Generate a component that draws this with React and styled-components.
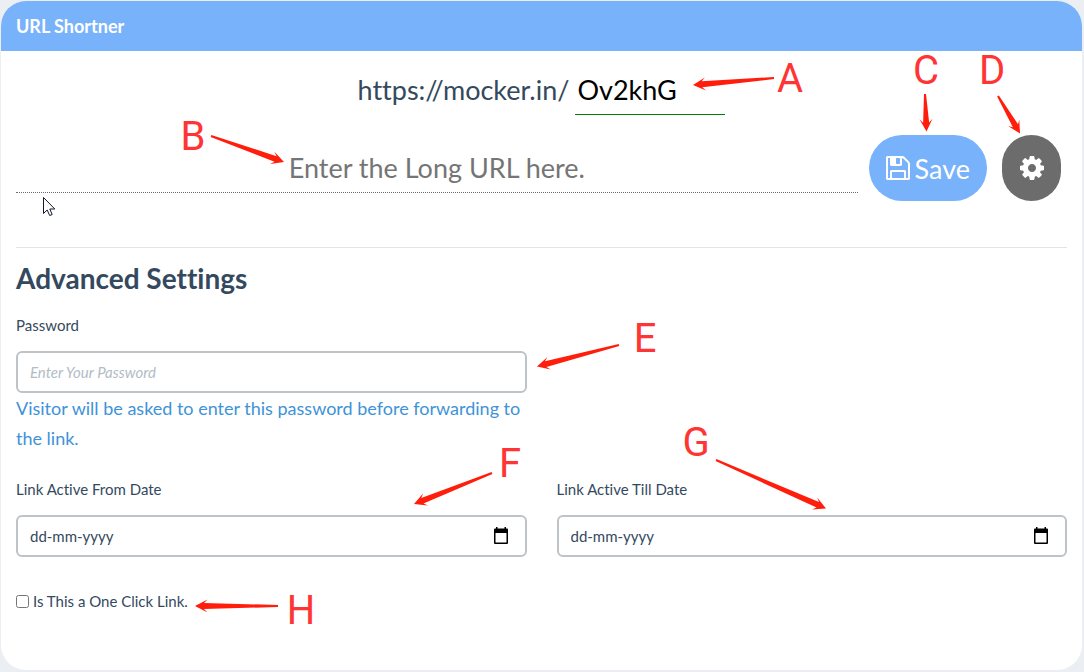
import React from "react";
import styled, { createGlobalStyle } from "styled-components";

const GlobalStyle = createGlobalStyle`
  *, *::before, *::after { box-sizing: border-box; }
  body {
    margin: 0;
    background: #ebeff3;
    color: #34495e;
    font-family: Lato, "Liberation Sans", sans-serif;
    font-size: 15px;
    font-variant-ligatures: none;
    line-height: 30px;
  }
  button, input { font-family: inherit; margin: 0; }
`;

const Page = styled.div`
  position: relative;
  padding: 1px 2px 2px 1px;
`;

const Card = styled.main`
  background: #fff;
  border-radius: 25px;
  overflow: hidden;
`;

const CardHeader = styled.header`
  background: #78b2fb;
  color: #fff;
  padding: 10px 15px;
  font-size: 18px;
  font-weight: 700;
`;

const CardBody = styled.form`
  padding: 14px 15px 54px;
`;

const SlugRow = styled.div`
  display: flex;
  justify-content: center;
  align-items: center;
  gap: 6px;
  font-size: 27px;
`;

const LineInput = styled.input`
  height: 50px;
  padding: 0 2px;
  border: 0;
  border-bottom: 1px ${(p) => p.$line};
  border-radius: 0;
  background: transparent;
  color: #000;
  font-size: 27px;
  outline: none;
  min-width: 0;
  &::placeholder { color: #757575; opacity: 1; }
`;

const SlugInput = styled(LineInput)`
  width: 150px;
`;

const LongInput = styled(LineInput)`
  flex: 1;
  text-align: center;
`;

const UrlRow = styled.div`
  display: flex;
  align-items: center;
  margin-top: 20px;
  padding-right: 6px;
`;

const PillButton = styled.button`
  display: flex;
  align-items: center;
  justify-content: center;
  gap: 5px;
  height: 66px;
  min-width: 59px;
  padding: 0 17px;
  margin-left: ${(p) => p.$gap};
  border: 0;
  border-radius: 33px;
  background: ${(p) => p.$color};
  color: #fff;
  font-size: 27px;
  cursor: pointer;
`;

const Divider = styled.hr`
  margin: 46px 0 0;
  border: 0;
  border-top: 1px solid #e3e4e6;
`;

const SectionTitle = styled.h2`
  margin: 0 0 2px;
  font-size: 28px;
  font-weight: 700;
  line-height: 60px;
`;

const FieldGrid = styled.div`
  display: grid;
  grid-template-columns: 1fr 1fr;
  column-gap: 30px;
  row-gap: 21px;
`;

const Field = styled.div`
  grid-column-start: ${(p) => p.$column};
`;

const FieldLabel = styled.label`
  display: block;
  margin-bottom: 11px;
`;

const InputBox = styled.div`
  display: flex;
  align-items: center;
  height: 42px;
  padding: 0 14px 0 12px;
  border: 2px solid #bdc3c7;
  border-radius: 6px;
`;

const BoxedInput = styled.input`
  flex: 1;
  min-width: 0;
  height: 100%;
  padding: 0;
  border: 0;
  outline: none;
  background: transparent;
  color: #34495e;
  font-size: 15px;
  &::placeholder { color: ${(p) => p.$hint}; font-style: ${(p) => p.$hintStyle}; opacity: 1; }
`;

const PickerButton = styled.button`
  display: flex;
  padding: 0;
  border: 0;
  background: none;
  color: #000;
`;

const Help = styled.p`
  margin: 0;
  color: #3e93d8;
  font-size: 18px;
`;

const CheckRow = styled.div`
  display: flex;
  align-items: center;
  gap: 4px;
  margin-top: 29px;
`;

const CheckBox = styled.input`
  width: 13px;
  height: 13px;
`;

const Overlay = styled.svg`
  position: absolute;
  left: 0;
  top: 0;
  pointer-events: none;
`;

const Marker = styled.span`
  position: absolute;
  left: ${(p) => p.$x}px;
  top: ${(p) => p.$y}px;
  width: 30px;
  margin: -15px 0 0 -15px;
  color: #ff3535;
  font: 40px/30px "Liberation Sans Narrow", Roboto, sans-serif;
  text-align: center;
  pointer-events: none;
`;

const FloppyIcon = () => (
  <svg width="24" height="24" viewBox="0 128 1536 1536" fill="currentColor" aria-hidden="true">
    <path d="M384 1536h768v-384h-768v384zm896 0h128v-896q0-14-10-38.5t-20-34.5l-281-281q-10-10-34-20t-39-10v416q0 40-28 68t-68 28h-576q-40 0-68-28t-28-68v-416h-128v1280h128v-416q0-40 28-68t68-28h832q40 0 68 28t28 68v416zm-384-928v-320q0-13-9.5-22.5t-22.5-9.5h-192q-13 0-22.5 9.5t-9.5 22.5v320q0 13 9.5 22.5t22.5 9.5h192q13 0 22.5-9.5t9.5-22.5zm640 32v928q0 40-28 68t-68 28h-1344q-40 0-68-28t-28-68v-1344q0-40 28-68t68-28h928q40 0 88 20t76 48l280 280q28 28 48 76t20 88z" />
  </svg>
);

const CogIcon = () => (
  <svg width="24" height="24" viewBox="0 128 1536 1536" fill="currentColor" aria-hidden="true">
    <path d="M1024 896q0-106-75-181t-181-75-181 75-75 181 75 181 181 75 181-75 75-181zm512-109v222q0 12-8 23t-20 13l-185 28q-19 54-39 91 35 50 107 138 10 12 10 25t-9 23q-27 37-99 108t-94 71q-12 0-26-9l-138-108q-44 23-91 38-16 136-29 186-7 28-36 28h-222q-14 0-24.5-8.5t-11.5-21.5l-28-184q-49-16-90-37l-141 107q-10 9-25 9-14 0-25-11-126-114-165-168-7-10-7-23 0-12 8-23 15-21 51-66.5t54-70.5q-27-50-41-99l-183-27q-13-2-21-12.5t-8-23.5v-222q0-12 8-23t19-13l186-28q14-46 39-92-40-57-107-138-10-12-10-24 0-10 9-23 26-36 98.5-107.5t94.5-71.5q13 0 26 10l138 107q44-23 91-38 16-136 29-186 7-28 36-28h222q14 0 24.5 8.5t11.5 21.5l28 184q49 16 90 37l142-107q9-9 24-9 13 0 25 10 129 119 165 170 7 8 7 22 0 12-8 23-15 21-51 66.5t-54 70.5q26 50 41 98l183 28q13 2 21 12.5t8 23.5z" />
  </svg>
);

const CalendarIcon = () => (
  <svg width="20" height="20" viewBox="0 0 20 20" aria-hidden="true">
    <path fill="currentColor" fillRule="evenodd" d="M5 1h1.500v1.500h7V1H15v1.500h1q1 0 1 1V17q0 1-1 1H4q-1 0-1-1V3.500q0-1 1-1h1zM4.500 7v9.500h11V7z" />
  </svg>
);

const markers = [
  { letter: "A", x: 790, y: 79, from: [774, 78], to: [693, 85] },
  { letter: "B", x: 193, y: 137, from: [211, 136], to: [284, 162] },
  { letter: "C", x: 926, y: 71, from: [925, 94], to: [926.5, 131.5] },
  { letter: "D", x: 992, y: 71, from: [998, 96], to: [1020, 133.5] },
  { letter: "E", x: 645, y: 339, from: [619, 345], to: [537, 366.5] },
  { letter: "F", x: 510, y: 464, from: [492, 473], to: [414, 504] },
  { letter: "G", x: 696, y: 443, from: [716, 460], to: [826, 508.5] },
  { letter: "H", x: 301, y: 611, from: [278, 606], to: [195, 606] },
];

// Tapered arrow: thin at the tail, widening towards a swept-back head.
function Arrow({ from, to }) {
  const dx = to[0] - from[0];
  const dy = to[1] - from[1];
  const len = Math.hypot(dx, dy);
  const at = (back, side) => {
    const t = (len - back) / len;
    return `${from[0] + dx * t - (dy / len) * side},${from[1] + dy * t + (dx / len) * side}`;
  };
  const points = [
    at(len, 1), at(9, 3), at(12.5, 6.5), at(0, 0), at(12.5, -6.5), at(9, -3), at(len, -1),
  ].join(" ");
  return <polygon points={points} fill="#ff1e0c" />;
}

function DateField({ id, label }) {
  return (
    <Field>
      <FieldLabel htmlFor={id}>{label}</FieldLabel>
      <InputBox>
        <BoxedInput id={id} type="text" placeholder="dd-mm-yyyy" $hint="#34495e" $hintStyle="normal" />
        <PickerButton type="button" aria-label={`Choose ${label}`}>
          <CalendarIcon />
        </PickerButton>
      </InputBox>
    </Field>
  );
}

export default function App() {
  return (
    <Page>
      <GlobalStyle />
      <Card>
        <CardHeader>URL Shortner</CardHeader>
        <CardBody onSubmit={(e) => e.preventDefault()}>
          <SlugRow>
            <label htmlFor="slug">https://mocker.in/</label>
            <SlugInput id="slug" defaultValue="Ov2khG" $line="solid green" />
          </SlugRow>
          <UrlRow>
            <LongInput aria-label="Long URL" placeholder="Enter the Long URL here." $line="dotted #6b6b6b" />
            <PillButton type="submit" $color="#78b2fb" $gap="11px">
              <FloppyIcon />
              Save
            </PillButton>
            <PillButton type="button" aria-label="Settings" $color="#6c6c6c" $gap="15px">
              <CogIcon />
            </PillButton>
          </UrlRow>
          <Divider />
          <SectionTitle>Advanced Settings</SectionTitle>
          <FieldGrid>
            <Field>
              <FieldLabel htmlFor="password">Password</FieldLabel>
              <InputBox>
                <BoxedInput id="password" type="password" placeholder="Enter Your Password" $hint="#b2bcc5" $hintStyle="italic" />
              </InputBox>
              <Help>Visitor will be asked to enter this password before forwarding to the link.</Help>
            </Field>
            <DateFieldRow />
          </FieldGrid>
          <CheckRow>
            <CheckBox id="one-click" type="checkbox" />
            <label htmlFor="one-click">Is This a One Click Link.</label>
          </CheckRow>
        </CardBody>
      </Card>
      <Overlay width="1084" height="672" viewBox="0 0 1084 672" aria-hidden="true">
        {markers.map((m) => (
          <Arrow key={m.letter} from={m.from} to={m.to} />
        ))}
        <path d="M43.500 197.500v16l3.700-3.500 2.500 5.500 2.500-1-2.400-5.500h5z" fill="#fff" stroke="#111827" />
      </Overlay>
      {markers.map((m) => (
        <Marker key={m.letter} $x={m.x} $y={m.y}>{m.letter}</Marker>
      ))}
    </Page>
  );
}

const WideGrid = styled(FieldGrid)`
  grid-column: 1 / -1;
`;

function DateFieldRow() {
  return (
    <WideGrid>
      <DateField id="from-date" label="Link Active From Date" />
      <DateField id="till-date" label="Link Active Till Date" />
    </WideGrid>
  );
}
